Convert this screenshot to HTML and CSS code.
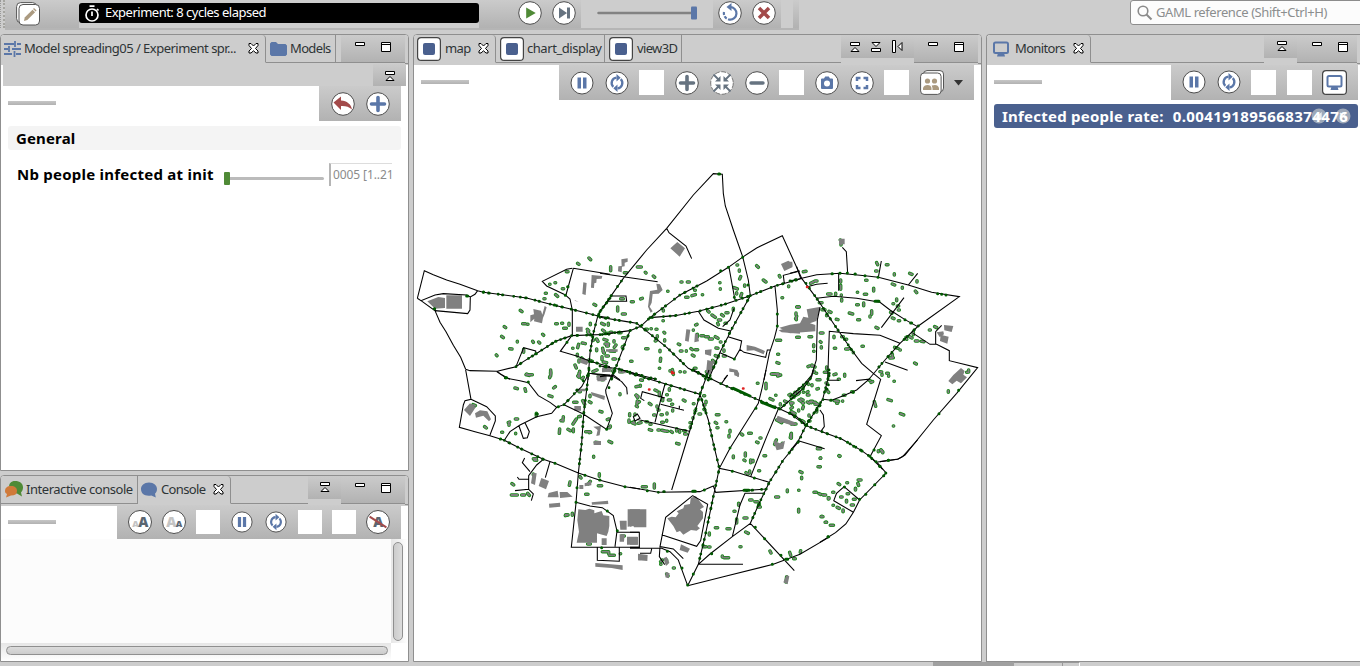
FILE: index.html
```html
<!DOCTYPE html>
<html lang="en">
<head>
<meta charset="utf-8">
<title>Experiment perspective</title>
<link rel="stylesheet" href="styles.css">
</head>
<body>
<svg class="defs" width="0" height="0">
  <defs>
    <symbol id="disc" viewBox="0 0 24 24"><circle cx="12" cy="12" r="11.3" fill="#fff" stroke="#4d4d4d"/></symbol>
    <symbol id="pause" viewBox="0 0 24 24"><circle cx="12" cy="12" r="11" fill="#fff" stroke="#4d4d4d"/><path d="M7.5 6.5h3.500v11H7.500zM13 6.500h3.500v11H13z" fill="#5b77a8"/></symbol>
    <symbol id="sync" viewBox="0 0 24 24"><circle cx="12" cy="12" r="11" fill="#fff" stroke="#4d4d4d"/><path d="M8.300 15.800A5.300 5.300 0 0 1 11.500 6.700M15.700 8.200A5.300 5.300 0 0 1 12.500 17.300" fill="none" stroke="#5b77a8" stroke-width="2.300"/><path d="M11.500 3l4.200 3.700-4.200 3.700zM12.500 13.600v7.400l-4.200-3.700z" fill="#5b77a8"/></symbol>
    <symbol id="minmax" viewBox="0 0 40 14"><path d="M.5 3.500h9v3h-9zM26.500 3.500h9v9h-9z" fill="#fff" stroke="#000"/><path d="M26.500 5.500h9" stroke="#000"/></symbol>
    <symbol id="toggle" viewBox="0 0 12 12"><path d="M1.500 1.500h9v3h-9zM2 10.500l4-4 4 4z" fill="#fff" stroke="#000"/></symbol>
    <symbol id="close" viewBox="0 0 11 11"><path d="M1 .5h2l2.500 2.500L8 .5h2v2L7.500 5.500 10 8v2H8L5.500 7.800 3 10H1V8l2.500-2.500L1 2.500z" fill="#fff" stroke="#000"/></symbol>
    <symbol id="display" viewBox="0 0 24 24"><rect x=".6" y=".6" width="22.800" height="22.800" rx="3.500" fill="#fff" stroke="#444" stroke-width="1.200"/><rect x="6" y="6" width="12" height="12" rx="2" fill="#4a608e"/></symbol>
    <symbol id="screen" viewBox="0 0 18 16"><rect x="2" y="1.500" width="14" height="10.500" rx="1.500" fill="none" stroke="#5b77a8" stroke-width="2"/><path d="M6 12h6l1 3.500H5z" fill="#5b77a8"/></symbol>
    <symbol id="bubble" viewBox="0 0 18 16"><path d="M9 .5c5 0 8 3 8 6.500 0 2-.8 3.500-2 4.800l.8 3.700-4.500-2C5 14.500 1 12 1 7 1 3.500 4 .5 9 .5z"/></symbol>
  </defs>
</svg>

<header class="top">
  <div class="grip"></div>
  <div class="top-edit shade"><svg width="24" height="25" viewBox="0 0 24 25"><rect x=".6" y="1.600" width="20" height="20" rx="4" fill="#fff" stroke="#555"/><rect x="3" y="3.500" width="20.500" height="20.500" rx="4" fill="#fff" stroke="#555"/><path d="M8 20l.7-3.500 7.800-7.800 2.600 2.600-7.800 7.800z" fill="#ab9a80"/><path d="M17 8l1-1 2.600 2.600-1 1z" fill="#ab9a80"/></svg></div>
  <div class="status"><svg width="16" height="17" viewBox="0 0 16 17"><circle cx="8" cy="10" r="6" fill="none" stroke="#fff" stroke-width="1.700"/><path d="M5.500 1.200h5M8 6.500V11M13 4l1.500 1.500" stroke="#fff" stroke-width="1.700"/></svg><span>Experiment: 8 cycles elapsed</span></div>
  <div class="top-run shade">
    <svg width="24" height="24" viewBox="0 0 24 24"><use href="#disc"/><path d="M8.200 6.500v11l9.500-5.500z" fill="#4f8a36"/></svg>
    <svg width="24" height="24" viewBox="0 0 24 24"><use href="#disc"/><path d="M7 6.500v11l8-5.500zM15 6.500h3v11h-3z" fill="#667380"/></svg>
  </div>
  <div class="top-speed"><svg width="102" height="16" viewBox="0 0 102 16"><path d="M1.500 7h94" stroke="#828282" stroke-width="2.500" stroke-linecap="round"/><rect x="94" y=".5" width="6" height="13" rx="1" fill="#5b77a8"/></svg></div>
  <div class="top-stop shade">
    <svg width="24" height="24" viewBox="0 0 24 24"><use href="#disc"/><path d="M12 6a6.300 6.300 0 1 1-6 5" fill="none" stroke="#5b77a8" stroke-width="2.200" stroke-dasharray="22 1.500 3 1.500 3 1.500"/><path d="M13.500 2v8L8.500 6z" fill="#5b77a8"/></svg>
    <svg width="24" height="24" viewBox="0 0 24 24"><use href="#disc"/><path d="M7 7l10 10M17 7L7 17" stroke="#a34a4a" stroke-width="3.500"/></svg>
  </div>
  <div class="top-gap"></div><div class="top-end shade"></div>
  <div class="search"><svg width="16" height="16" viewBox="0 0 16 16"><circle cx="6" cy="6" r="4.800" fill="none" stroke="#8a8a8a" stroke-width="1.600"/><path d="M9.500 9.500l5 5" stroke="#8a8a8a" stroke-width="2"/></svg><span>GAML reference (Shift+Ctrl+H)</span></div>
</header>

<main class="work">
  <div class="left">
    <section class="panel params">
      <div class="tabs">
        <div class="tab active t-model"><svg width="17" height="16" viewBox="0 0 17 16"><path d="M0 3h10M13 3h4M11 0v6M0 8h4M8 8h9M5 5v6M0 13h8M12 13h5M10.500 10v6" stroke="#5b77a8" stroke-width="1.800"/></svg><span>Model spreading05 / Experiment spr...</span><svg class="x" width="11" height="11"><use href="#close"/></svg></div>
        <div class="tab t-models"><svg width="17" height="14" viewBox="0 0 17 14"><path d="M1.500 0H6l2 2h7.500L17 3.500v9L15.500 14h-14L0 12.500v-11z" fill="#5b77a8"/></svg><span>Models</span></div>
        <div class="fill"></div>
        <div class="mm shade"><svg width="40" height="14"><use href="#minmax"/></svg></div>
      </div>
      <div class="strip"><div class="shade"><svg width="12" height="12"><use href="#toggle"/></svg></div></div>
      <div class="barrow"><i class="handle"></i>
        <div class="bar shade">
          <svg width="24" height="24" viewBox="0 0 24 24"><use href="#disc"/><path d="M2.500 10.500L10 4.500v4c6 .5 10 3.500 11 9-3-3-7-3.800-11-3.500v4z" fill="#a34a4a"/></svg>
          <svg width="24" height="24" viewBox="0 0 24 24"><use href="#disc"/><path d="M12 5.500v13M5.500 12h13" stroke="#5b77a8" stroke-width="3.600" stroke-linecap="round"/></svg>
        </div>
      </div>
      <h2 class="group">General</h2>
      <div class="param"><label>Nb people infected at init</label><div class="slider"><i></i></div><div class="field"><span>0005 [1..21</span></div></div>
    </section>
    <section class="panel console">
      <div class="tabs">
        <div class="tab t-inter"><svg width="20" height="18" viewBox="0 0 20 18"><path d="M11 0c5 0 8 2.500 8 6.500 0 2-1 4-2 5l1 4-5-3C8 12 5 10 5 6 5 2.500 7 0 11 0z" fill="#4f8a36"/><path d="M7 5c4 0 6 2 6 5s-2 4.500-6 4.500L2 16.500l1-3.500C1 12 1 11 1 10c0-3 2-5 6-5z" fill="#d07a3a"/></svg><span>Interactive console</span></div>
        <div class="tab active t-cons"><svg width="18" height="16" fill="#5b77a8"><use href="#bubble"/></svg><span>Console</span><svg class="x" width="11" height="11"><use href="#close"/></svg></div>
        <div class="fill"></div>
        <div class="tg shade"><svg width="12" height="12"><use href="#toggle"/></svg></div>
        <div class="mm shade"><svg width="40" height="14"><use href="#minmax"/></svg></div>
      </div>
      <div class="barrow"><i class="handle"></i>
        <div class="bar shade">
          <span class="letters"><small>A</small><b>A</b></span>
          <span class="letters rev"><b>A</b><small>A</small></span>
          <i class="sq"></i><svg width="22" height="22"><use href="#pause"/></svg><svg width="22" height="22"><use href="#sync"/></svg><i class="sq"></i><i class="sq"></i>
          <span class="letters off"><b>A</b></span>
        </div>
      </div>
      <div class="output"><div class="text"></div><div class="vs"><i></i></div><div class="hs"><i></i></div></div>
    </section>
  </div>

  <section class="panel map">
    <div class="tabs">
      <div class="tab active t-map"><svg width="24" height="24"><use href="#display"/></svg><span>map</span><svg class="x" width="11" height="11"><use href="#close"/></svg></div>
      <div class="tab t-chart"><svg width="24" height="24"><use href="#display"/></svg><span>chart_display</span></div>
      <div class="tab t-view"><svg width="24" height="24"><use href="#display"/></svg><span>view3D</span></div>
      <div class="fill"></div>
      <div class="tg shade"><svg width="56" height="14" viewBox="0 0 56 14"><path d="M1.500 2.500h9v3h-9zM2 11.500l4-4 4 4zM22.500 8.500h9v3h-9zM23 2.500h8l-4 4zM43.500.5h3v12h-3zM53 2.500v8l-4-4z" fill="#fff" stroke="#000"/></svg></div>
      <div class="mm shade"><svg width="40" height="14"><use href="#minmax"/></svg></div>
    </div>
    <div class="barrow"><i class="handle"></i>
      <div class="bar shade">
        <svg width="24" height="24"><use href="#pause"/></svg><svg width="24" height="24"><use href="#sync"/></svg><i class="sq"></i>
        <svg width="24" height="24" viewBox="0 0 24 24"><use href="#disc"/><path d="M12 5.500v13M5.500 12h13" stroke="#667380" stroke-width="3.600" stroke-linecap="round"/></svg>
        <svg width="24" height="24" viewBox="0 0 24 24"><circle cx="12" cy="12" r="11.300" fill="#fff" stroke="#777" stroke-dasharray="5 1.500"/><path d="M3.500 3.500L9 9M20.500 3.500L15 9M3.500 20.500L9 15M20.500 20.500L15 15" stroke="#667380" stroke-width="1.800"/><path d="M10.500 5v5.500H5zM13.500 5v5.500H19zM10.500 19v-5.500H5zM13.500 19v-5.500H19z" fill="#667380"/></svg>
        <svg width="24" height="24" viewBox="0 0 24 24"><use href="#disc"/><path d="M6 12h12" stroke="#667380" stroke-width="3.400" stroke-linecap="round"/></svg><i class="sq"></i>
        <svg width="24" height="24" viewBox="0 0 24 24"><use href="#disc"/><path d="M7 7.500h2l1.200-2h3.600l1.200 2h2q1 0 1 1V17q0 1-1 1H7q-1 0-1-1V8.500q0-1 1-1z" fill="#5b77a8"/><circle cx="12" cy="12.500" r="3" fill="#fff"/></svg>
        <svg width="24" height="24" viewBox="0 0 24 24"><use href="#disc"/><path d="M7 10V7h3.500M13.500 7H17v3M17 14v3h-3.500M10.500 17H7v-3" fill="none" stroke="#5b77a8" stroke-width="2.500"/></svg><i class="sq"></i>
        <svg width="24" height="25" viewBox="0 0 24 25"><rect x="3.500" y=".6" width="20" height="21" rx="3.500" fill="#fff" stroke="#555"/><rect x=".6" y="3" width="20.500" height="21.400" rx="3.500" fill="#fff" stroke="#555"/><g fill="#ab9a80"><circle cx="7.500" cy="11" r="2.600"/><circle cx="14.500" cy="11" r="2.600"/><path d="M3 20v-2q1-3 4.500-3t4 3v2zM12.500 20v-2l-.8-2.500q6-2 7.300 2.500v2z"/></g></svg>
        <svg class="drop" width="9" height="6"><path d="M0 0h9L4.500 5.500z" fill="#333"/></svg>
      </div>
    </div>
    <svg class="city" width="566" height="560" viewBox="414 100 566 560">
      <defs>
        <g id="main">
          <path transform="translate(410 160) scale(.3333)" d="M220 397L350 414 430 435 485 448 565 468 600 474M485 527L600 523M318 620L340 605 377 582 437 544 485 527M600 415L570 455 563 470 550 520 540 580 534 660M545 605L600 620"/>
          <path transform="translate(600 160) scale(.3333)" d="M0 455L70 355M0 472L80 485 110 490 122 499M0 524L90 512 122 499 150 473 225 467 295 454 370 434 451 407 525 378 600 357M122 499L200 562 265 625 325 655M90 512L35 655M0 618L60 628 130 648 170 658M451 407L392 513 360 577 325 660M150 473L240 405 320 363"/>
          <path transform="translate(790 220) scale(.3333)" d="M48 190L80 235 130 310 185 390M0 183L35 175M385 318L330 370 285 420 250 460M118 460L98 538 48 617M0 580L48 617 90 633 155 657 215 692 240 710 278 748M40 495L0 530"/>
          <path transform="translate(440 370) scale(.3333)" d="M447 0L440 60 431 132 425 220 415 310M520 10L505 60M545 0L600 15M193 211L240 235 310 268M372 104L400 75 447 10"/>
          <path transform="translate(630 370) scale(.3333)" d="M0 10L210 73 235 0M190 0L270 40 350 75 450 117 500 140 527 165 565 182M210 73L235 150 250 220 268 295 250 380 225 500 205 583M597 0L597 40 575 100 527 165 508 212 460 270 418 337 390 395 361 460M450 117L520 55 545 20M210 73L180 180M350 362L410 357M85 367L125 362"/>
        </g>
        <g id="houses">
          <path transform="translate(410 160) scale(.3333)" d="M503 310l4 3M537 294l5 5M469 335h5M409 400h-3M437 404l6 5M402 416h3M457 386h4M419 373h1M435 368h2M331 451l5 4M338 491h8M352 493h2M283 500l4 3M275 529l5 4M322 544v2M368 544l2 3M386 546l3 3M299 566l7 1M259 585l2 2M341 568v9M437 491h5M455 490h3M477 490v6M461 505h8M541 490v4M552 433l5 3M575 490l8 4M398 523l3 3M506 553l-3 10M526 551l-9-2M502 583v5M488 565h1M533 516l6 7M560 537l4 7M551 540l-3 2M582 538l9 3M590 558h5M580 575l3 4M560 567v5M495 615l4 9M515 594l4 4M537 600l10 4M507 640v12M561 630l-12 5M580 606l10 2M350 642l8 4M422 636v12M573 648l10 6M520 652l-4 4M532 508l4 4M507 600v6M595 490v6M593 520h5"/>
          <path transform="translate(600 160) scale(.3333)" d="M32 320v12M112 321h12M136 337l2 2M73 338h7M94 425h6M127 415l-5 2M160 348l4 4M53 441v12M67 462h9M190 450v3M203 394h1M189 482h1M246 366h-3M262 366h6M257 412h7M276 407l10-3M307 404h1M284 391h2M359 368h1M361 386v2M323 452l4 4M336 465l10 7M365 464l5 4M384 458h-6M362 480h-7M353 490l2 4M375 490h4M400 445v6M62 416h8M411 315h2M418 330v4M422 350l-3 7M434 375v4M402 383l10 4M410 398v4M425 401l-3 8M470 317l5 5M490 360l8 6M538 347l2 4M566 378v2M546 413h2M592 440h4M590 469l-3 7M530 541h12M533 583h3M531 608l6 2M514 642h11M542 645l-9 3M287 495l4-2M280 510v1M292 523v8M303 527h8M317 530h8M328 537h9M346 530l8 5M361 546h2M348 564l6 1M346 587l8 4M370 588h6M338 601l8 8M333 618l4 7M319 635h4M372 570v4M136 508h6M153 506h1M168 508h3M192 517l2 2M172 527v4M194 539v4M170 540l-4 3M137 566h7M180 571v4M182 595l-1 9M92 604h4M235 552l4 2M241 573h5M273 566l4 3M259 572v2M286 569h7M277 585l5 3M217 629l2 8M241 635h-1M253 636h2M283 625h5M178 625h1M210 632v1M8 510l6 5M31 517h5M55 518h8M68 533h7M42 542v4M15 552h11M48 555l-5 7M8 565l3 13M30 573l14 1M18 588h7M6 590v9M68 560l-1 2M39 597h7"/>
          <path transform="translate(790 220) scale(.3333)" d="M151 60l5 8M153 73v2M40 155l8-1M62 190l9-5M75 183h6M152 180v6M152 196v12M260 128l3 6M289 134h5M257 153h4M313 161v4M359 160l7 3M381 182v4M307 192l7 3M337 202v3M376 213l4 5M202 217h1M223 223h7M251 205v8M227 181h4M113 222h10M154 225v1M137 220v4M155 238v5M200 254h5M221 249v8M245 272v11M240 288v3M178 279l10 3M203 299h6M320 237v5M309 251h2M322 258h4M328 270h-3M306 280l-4-3M307 294l5 2M325 302h4M258 322l6 3M20 261h8M18 279v5M19 297v2M88 248h8M96 269h9M117 274l6 3M110 284v3M139 298l5 1M91 339h8M57 350h8M20 352h8M91 365l2 2M94 380v4M71 374v6M71 394h1M132 349v4M155 350h5M167 358h3M133 385h4M167 387h5M175 387l3-2M190 397v1M216 379h4M164 463v6M148 478h-3M138 462l-6 2M70 438l5 3M54 440l5-2M66 435v4M110 441v5M103 457h8M78 460h2M72 453v4M81 479h9M66 494v3M85 506l-4 1M108 489h3M111 511l5 6M52 490l4 3M39 502v5M54 515l-3 2M15 517v6M25 522l-6 3M33 537l6 3M4 550v4M52 546l5 3M60 545l4 3M75 553h9M4 575l11 6M36 602l6 4M57 603h3M6 612h12M80 570v6M57 585v3M80 550l8 7M133 542l13 2M140 550h3M158 543v1M165 526h-5M185 515h4M253 545l4 14M294 539l10 3M331 581l10 4M310 618h1M374 429l5 3M314 382l10 3M330 390h1M307 403v11M300 414l10-1M348 352l2 6M359 350l7 4M370 335v9M376 363h8M394 364l8 1M418 330h3M434 320l6 3M475 512v5M536 450v6M530 457h2M270 455l5 1M276 463v3M290 460h5M296 467v2M312 484h1M237 481h3M243 487l5-2M273 690l5 5M265 692v3M148 708h2M83 685h9M90 715h2M84 740h5M4 640v14"/>
          <path transform="translate(440 370) scale(.3333)" d="M258 14l8 1M270 14h7M332 0v12M329 20v3M225 54l7 2M255 56l2 8M341 54l5-4M327 77l9 3M413 18h4M419 4v5M370 140v4M363 152l5-3M369 147v6M409 147l-10 15M400 177v8M384 178l7 4M416 140l5-1M401 97h10M428 92l6 11M448 95l5 3M450 76v4M417 65h4M437 185h13M452 187l-4 1M461 259v3M466 217l11 1M507 214l8 4M511 168v3M505 173h4M480 124l6 2M507 147l-5 2M540 71v3M539 5h10M588 50l7-1M589 75l5 4M592 93l-1 9M589 108l3 2M569 131v6M567 150v7M576 158l9 4M585 132v3M205 158l4-2M207 162v4M226 147h7M185 187h3M227 190v1M359 177l-1 13M134 170l5 4M289 130v8M99 104l7 3M280 266h9M283 270l7 1M216 341l5 4M214 375h18M245 375h9M263 370l5 6M280 312v3M390 336l-2 10M420 320l3 4M451 334l-6 8M478 311v8M475 347h10M437 373h7M377 434h7M397 430v6M376 437l8-2M443 522h8M545 498h8M487 545h15M506 545v6M508 556h15M541 551h1M518 3h6M475 20l10-2M490 29h-5"/>
          <path transform="translate(630 370) scale(.3333)" d="M127 7l3 6M32 30l5 1M31 46v3M18 76l5 7M26 97l2-2M58 100l5 4M75 60l6 3M88 67v10M118 56v5M110 74h2M115 90h7M125 103h3M98 88v4M81 108v3M84 120h3M93 134h4M111 129v3M128 120v3M160 90l5 3M190 101h2M207 132h5M189 143v2M180 158h3M181 170v3M12 154v6M25 160l8-2M48 155h4M60 163h3M58 179l7 2M84 180h4M96 181l9 2M109 184h4M123 184l4 3M140 176v7M149 183v4M161 182h5M164 192h5M95 157h5M110 151v3M71 135h4M140 220l7 2M195 122h2M221 77h3M228 94v4M221 105h4M222 118l3 2M259 134h8M288 155h2M256 157l4 3M261 173h3M300 181v5M297 196v5M334 192l4 3M356 190h8M380 216l4 2M390 204h3M346 249v9M310 258v5M342 270l3 2M362 270v8M369 271v4M402 257h5M386 302h3M359 303v6M348 308l6 4M483 193l-2 10M483 202v2M439 210l-5 13M457 220l-5 8M440 150l15 8M462 153l12 2M484 162h8M382 40h2M428 12h17M408 40v16M420 86l9 4M437 76h1M451 101v4M464 93l6 3M483 82h9M482 99h7M477 75l4-2M502 65l6 3M520 67h1M532 75h5M507 90l6 4M517 99h4M542 94h6M552 97h4M520 110l-2 6M483 115l4-3M506 120v3M530 38h3M572 263v2M570 290h1M510 305l6 3M515 322v4M562 236h10M472 360v5M506 361h1M437 381h9M552 367h7M567 371l5 2M581 375h6M595 383v4M506 418v8M573 440h6M588 457h2M359 390h7M375 395h8M384 411h7M388 400v5M326 400v6M312 424h3M320 447v12M342 444h9M347 486l8 4M291 476h9M256 473h7M238 489v6M220 530h8M236 531h4M330 530h3M282 563h14M277 558v3M420 543l3 6M479 547l3 9M491 566h5M512 542l-1 5M37 350h12M73 342v12M92 575l5-5M92 583h1M110 570v8M110 612l4 6M130 594h3M470 620l-2 16"/>
          <path transform="translate(820 440) scale(.3444 .3333)" d="M177 30l5 8M55 47l2 2M53 131l4 3M78 128h2M111 120h8M110 130l2 6M103 145v5M37 157h3M8 164h1M26 173v3M60 171h4M79 161h4M77 181v5M97 178h5M91 195h6M50 202l6 3M67 210v5M5 229h1M15 247h3M30 256h9M38 196h1"/>
        </g>
      </defs>
      <use href="#houses" class="h-green"/>
      <use href="#houses" class="h-grey"/>
      <g class="blocks">
        <path transform="translate(410 160) scale(.3333)" d="M52 424L85 411 105 414V444L75 446zM109 406H156V446H109zM370 447L393 452 397 464 404 438 410 442 404 462 399 474 396 490 372 484 373 476 361 487 361 466 372 463zM545 345L577 348 575 356 560 357 559 368 553 370 552 384 543 383zM520 367L530 369 527 405 517 402zM498 500H518V515H498zM512 594L540 600 530 615 511 608zM576 625L600 624V635L576 637zM560 646H590V660H560zM493 420l13 5-10-2z"/>
        <path transform="translate(600 160) scale(.3333)" d="M211 265L232 246 255 265 239 290zM64 298L83 295V305L74 308V319L66 320 65 337 54 334 55 319 65 318zM150 393L172 389 169 371 180 373 188 390 176 401 158 402 155 428 149 440 158 454 152 458 144 440zM259 508L271 509 266 545 255 542zM285 519l8 5 4 20-14 3zM315 570l20-2-2 20-18-5zM322 600l20 5-10 35-15 10zM440 555L465 560 495 573 491 583 462 571 440 572zM388 625L412 630 418 642 414 652 403 637 388 635zM536 511L575 500 600 493V521L545 517zM543 312L565 302 577 310 577 322 553 333zM8 620l28 5-4 12-25-5zM18 568h35v7H18zM55 630h22v10H55z"/>
        <path transform="translate(790 220) scale(.3333)" d="M-32 323L0 314 30 310 40 290 55 293 50 268 92 260 79 303 60 310 76 315V334L0 340zM462 315L490 318 485 336 463 331zM440 337l20-3 2 9-13 8zM452 344L476 350 472 371 450 363zM475 483L490 465 513 444 524 453 520 464 531 472 513 490 500 482 487 493zM147 56h17v17h-17zM0 125h7v15H0z"/>
        <path transform="translate(440 370) scale(.3333)" d="M72 120L90 100 107 112 90 138zM105 130L120 121 142 124 153 148 147 154 130 137 108 143zM304 324L327 333 318 358 296 348zM278 308L290 310 285 345 273 340zM326 369L353 362 356 382H323zM359 366H382L398 380 360 384zM327 401L360 398 361 410 328 413zM453 66L495 78 493 90 455 76zM413 56H436V64H413zM460 170L483 168 479 196 469 198 473 180zM461 213h22v12h-22zM472 22h24v12h-24zM403 108h20v14h-20zM455 397L504 392 505 402 456 404zM415 418L436 420 448 416 463 421V430L485 423 490 436 508 438V468L505 485 500 498 471 490V518H410L417 485 412 450zM485 505h15v20h-15zM539 452h21v27h-19zM563 418H600V470L589 467 563 470zM561 500h32v24h-32zM539 493h15l-2 22h-13zM466 579L548 586V600L515 594 466 590zM594 553h8v18h-8zM418 345h12v12h-12zM434 340l20-6v12l-20 3z"/>
        <path transform="translate(630 370) scale(.3333)" d="M190 380L198 379 222 411 210 418 219 426V445L202 468 210 475 200 482 183 480 160 494 150 483 140 487 130 468 112 445 125 440 137 442 146 430 140 424 160 415 163 405 180 402 182 385zM0 418H49V472H12L10 467 0 470zM153 523L180 536 173 548 149 540zM24 551L53 555 52 573 25 571zM0 501h24v23H0zM470 615l8 4-5 24-13-6zM100 565l10-5 8 18-10 10zM443 137L495 157 490 168 438 150zM430 212l20 8 15-8-5 24-20 5zM312 3l15 6v12l-14-5zM107 605l12 5-3 15-10-3z"/>
      </g>
      <g class="roads">
        <path transform="translate(410 160) scale(.3333)" d="M22 415L43 332 70 344 110 360 150 373 203 392 220 397 350 414 430 435 485 448 565 468 600 474M22 415L33 422 75 405 100 401 170 405 181 411 195 403 203 392M181 411L180 450 173 461 75 452 33 422M75 452L90 487 108 515 130 556 152 592 167 628M167 628L180 632 262 634 318 620 340 605 377 582 437 544 485 527 600 523M262 634L270 641 300 658M318 620L341 563 377 573 378 582M487 325L470 328 397 364 410 378 465 404 480 417 487 450V527M490 325L600 343M490 325L468 405M600 415L570 455 563 470 550 520 540 580 534 660M483 530L451 574 500 588 545 605 600 620M534 640L600 645"/>
        <path transform="translate(600 160) scale(.3333)" d="M0 455L70 355 140 270 200 205 280 105 340 41 367 43 370 100 376 138 400 210 428 290 445 360 451 407M200 205L207 218 258 258 275 296M0 340L75 351 173 365M33 408H78L80 424H22M0 472L80 485 110 490 122 499M0 524L90 512 122 499 150 473 210 428 240 405 320 363 385 322 427 292 470 264 547 227 605 355M150 473L225 467 295 454 370 434 451 407 525 378 600 357M295 454L312 480 355 505 392 513M387 322L405 420M451 407L392 513 384 530 360 577 325 660M402 445L390 480 368 500M384 530L425 543 420 568 403 597 360 578M420 568L432 577 497 592 502 570H512M525 378L532 450V500L523 535 508 580 492 660M122 499L200 562 265 625 325 655M90 512L35 655M0 618L60 628 130 648 170 658M600 333L550 346 553 370M383 645L372 658M0 650L40 645 60 660"/>
        <path transform="translate(790 220) scale(.3333)" d="M35 175L80 235 130 310 185 390 215 430 250 460 272 478 230 613 274 647 240 710M0 183L80 164 150 160 225 167 265 172 355 195 425 217 508 230 385 318 330 370 285 420 235 480 200 510 160 527 125 541 98 538M157 82L169 95 173 160M146 160V212M274 123L265 172M383 160L355 195M52 200L80 193 113 190M80 235L130 229 200 235 270 247 300 270 345 299 383 320M342 233L274 323M90 262L82 300 79 420 65 465 40 495 0 530M330 370L270 346 190 341 118 334 113 480 98 538 48 617 25 662 0 693M370 340L420 373H440L478 392V422L563 443 500 520 430 600 345 705 325 717 270 725M437 373V335L455 316M285 426L353 451M113 481H147M198 482L240 477M0 580L48 617 90 633 155 657 215 692 240 710 278 748M90 570L100 585 103 620 92 635M25 662L104 686M0 160L25 153M33 178L20 140"/>
        <path transform="translate(440 370) scale(.3333)" d="M77 0L93 88 75 92 70 105 58 172 105 185 150 197 193 211 240 235 310 268 345 280 415 309 480 331 555 350 600 357M93 88L140 110 166 138V153L150 195M170 5L200 25 240 32 265 38 295 77 330 97 350 112 335 130 290 140 240 165 210 185 193 211M237 168L250 205 262 203 268 185 255 158M350 112L372 104 400 75 425 50 447 10 520 20 545 35 560 53 562 73M372 104L430 132 500 178 517 130 498 70 497 60 522 0M447 0L440 60 431 132 425 220 415 310 408 400 394 532H600M408 397L450 408 487 413 520 437 531 483 525 530M531 487H598M472 532V571L538 574V532M310 268L290 285 266 317V358L280 372 274 392M266 358L225 362M266 328H237L232 321M254 264L247 278 270 305M330 275L316 323M545 0L600 15"/>
        <path transform="translate(630 370) scale(.3333)" d="M0 10L210 73 237 0M190 0L270 40 350 75 450 117 500 140 527 165M210 73L235 150 250 220 268 295 250 380 225 500 205 583 173 647M408 0L395 60 385 100 350 155 300 235 268 295 310 304 375 324 418 337M450 117L520 55 545 20 550 0M508 212L460 270 418 337 390 395 361 460 307 500 240 552 205 583M445 117L410 200 362 320M210 73L180 180 125 360M0 352L85 367 210 365 250 348 257 367 410 357M405 370H345L330 405 307 500M361 460L493 602M205 583H339M173 647L280 620 430 583 510 553 600 500M188 377L107 442 90 530 130 537 160 566M188 377L233 403 212 512 200 529 95 494M0 535H95L120 545 145 570 173 647M90 530L88 560 104 584M65 537L62 550H30M0 487H28V532H0M105 42L92 90 75 157M20 148L178 184M43 92L32 85 37 65 105 84M92 103L162 121M148 107V118M10 140L22 132 30 145 15 153zM293 15L275 40"/>
        <path transform="translate(820 440) scale(.3444 .3333)" d="M145 50L168 70 192 99 115 180 97 217 75 252 45 278 0 307M283 0L240 50 225 58 168 66M115 180L70 140 48 160 40 182 97 217"/>
      </g>
      <use href="#main" class="people"/>
      <g class="walkers">
        <path transform="translate(410 160) scale(.3333)" d="M220 396h1M170 408h3M433 435h1M466 406h0M473 380h1M73 446h1M287 653h3M377 581h2M437 544h1M471 547h0"/>
        <path transform="translate(600 160) scale(.3333)" d="M356 42h3M362 332h0M385 322h0M428 292h0M444 375h0M532 462h0M532 498h0M403 412h0M403 597h0"/>
        <path transform="translate(790 220) scale(.3333)" d="M126 161h1M150 160h0M172 159h0M195 162h1M225 167h0M264 172h0M443 221h0M455 223h0M468 225h0M362 309h3M255 244h12M506 511h0M447 581h0M295 721h1M270 739h0M345 299h0M190 517h0M122 541h2"/>
        <path transform="translate(440 370) scale(.3333)" d="M196 23h0M265 36h0M355 110h0M289 132h3M181 207h1M435 316h0M479 330h1M555 350h0M411 353h0M408 397h0M502 423h0M532 482h0M500 178h0M485 533h0M345 280h0"/>
        <path transform="translate(630 370) scale(.3333)" d="M188 364h8M223 360h0M342 361h15M52 362h0M300 234h0M378 115h0M307 304h0M245 551h0M190 612h0M173 645h0M427 583h0M404 506h0M376 472h0M453 556h0M594 500h0M156 594h0M112 544h0M467 568h6M373 324h0M310 55l50 23M395 97l40 16"/>
        <path transform="translate(820 440) scale(.3444 .3333)" d="M80 7h0M98 19h0M122 33h0M145 49h0M157 30h0M163 65h0M174 79h0M191 99h0M185 107h0M159 134h0M133 163h0M115 178h0M71 141h0M24 290h0M198 61h0"/>
      </g>
      <path class="sick" d="M807 287h.5M673 373h.5M743 388.500h.5M649 389.500h.5M672 372v1"/>
    </svg>
  </section>

  <section class="panel monitors">
    <div class="tabs">
      <div class="tab active t-mon"><svg width="18" height="18" viewBox="0 0 18 16"><use href="#screen"/></svg><span>Monitors</span><svg class="x" width="11" height="11"><use href="#close"/></svg></div>
      <div class="fill"></div>
      <div class="tg shade"><svg width="12" height="12"><use href="#toggle"/></svg></div>
      <div class="mm shade"><svg width="40" height="14"><use href="#minmax"/></svg></div>
    </div>
    <div class="barrow"><i class="handle"></i>
      <div class="bar shade">
        <svg width="24" height="24"><use href="#pause"/></svg><svg width="24" height="24"><use href="#sync"/></svg><i class="sq"></i><i class="sq"></i>
        <svg width="25" height="25" viewBox="0 0 25 25"><rect x=".6" y=".6" width="23.800" height="23.800" rx="3.500" fill="#fff" stroke="#444" stroke-width="1.200"/><use href="#screen" x="3.500" y="4.500" width="18" height="16"/></svg>
      </div>
    </div>
    <div class="monitor">
      <svg class="m-btns" width="40" height="18" viewBox="0 0 40 18"><circle cx="8" cy="9" r="7.500" fill="#9da8b8"/><circle cx="32" cy="9" r="7.500" fill="#9da8b8"/><path d="M4 11.500L10 6.500v5zM29 6l6 6M35 6l-6 6" stroke="#e8ebee" stroke-width="1.400" fill="#e8ebee"/></svg>
      <span class="m-name">Infected people rate:</span><span class="m-val">0.004191895668374476</span>
    </div>
  </section>
</main>
<footer class="bottom"><i class="b1"></i><i class="b2"></i><i class="b3"></i></footer>
</body>
</html>
```
FILE: styles.css
```css
* { box-sizing: border-box; }
body {
  margin: 0;
  width: 1360px;
  height: 666px;
  overflow: hidden;
  display: flex;
  flex-direction: column;
  background: #cdcdcd;
  color: #2e3436;
  font-family: "Noto Sans", sans-serif;
  font-size: 13px;
  white-space: nowrap;
}
svg { display: block; flex: none; }
.defs { position: absolute; }
.shade { background: linear-gradient(#cbcbcb, #b2b2b2); }

/* Main toolbar */
.top {
  height: 34px;
  flex: none;
  display: flex;
  align-items: flex-start;
  background: linear-gradient(#b5b5b5, #b5b5b5) 5px 28px / 794px 2px no-repeat;
}
.top > div { height: 28px; flex: none; }
.top .grip { width: 5px; border-left: 1px dotted #999; border-right: 2px dotted #a5a5a0; }
.top-edit { width: 74px; padding: 1px 0 0 11px; }
.top .status {
  width: 400px;
  height: 20px;
  margin-top: 3px;
  border-radius: 3px;
  background: #000;
  color: #fff;
  display: flex;
  align-items: center;
  gap: 5px;
  padding-left: 5px;
}
.status span { letter-spacing: -0.5px; line-height: 18px; margin-top: -2px; }
.top-run { width: 102px; padding: 1px 0 0 39px; display: flex; gap: 10px; }
.top-speed { width: 132px; padding: 6px 0 0 16px; }
.top-stop { width: 68px; padding: 1px 0 0 5px; display: flex; gap: 10px; }
.top-gap { width: 12px; }
.top-end { width: 6px; }
.top .search {
  width: 240px;
  height: 25px;
  margin-left: 331px;
  border: 1px solid #8c8c8c;
  border-radius: 3px;
  background: #fcfcfc;
  display: flex;
  align-items: center;
  gap: 3px;
  padding-left: 6px;
  color: #8b8e8f;
}
.search span { letter-spacing: -0.42px; margin-top: -1px; }

/* Workbench columns */
.work { height: 628px; flex: none; display: grid; grid-template-columns: 409px 569px 374px; column-gap: 4px; }
.left { display: grid; grid-template-rows: 437px 187px; row-gap: 4px; min-height: 0; }
.panel { border: 1px solid #8f8f8f; border-radius: 4px 4px 0 0; background: #fff; overflow: hidden; min-width: 0; display: flex; flex-direction: column; }
.tabs { height: 30px; flex: none; display: flex; background: #cdcdcd; border-bottom: 2px solid #cdcdcd; }
.tab { height: 28px; display: flex; align-items: center; flex: none; border-right: 1px solid #8f8f8f; border-bottom: 1px solid #8f8f8f; }
.tab.active { border-bottom-color: #cdcdcd; border-radius: 0 4px 0 0; }
.tab span { flex: 1; min-width: 0; margin-top: -2px; letter-spacing: -0.65px; }
.tabs .fill { flex: 1; border-bottom: 1px solid #8f8f8f; }
.mm { border-bottom: 1px solid #8f8f8f; }
.mm svg { margin-top: -1px; }
.tg { height: 23px; }
.tabs::after { content: ""; border-bottom: 1px solid #8f8f8f; height: 28px; width: 3px; }
.t-model { width: 265px; padding: 0 6px 0 3px; gap: 3px; }
.tab.t-model span { letter-spacing: -0.52px; }
.t-models { width: 70px; padding-left: 4px; gap: 3px; }
.params .mm, .console .mm { width: 64px; padding: 5px 0 0 14px; }
.strip { height: 22px; flex: none; margin: -1px 2px 0; background: #cdcdcd; display: flex; justify-content: flex-end; }
.strip div { width: 33px; padding: 6px 0 0 11px; }
.barrow { height: 35px; flex: none; display: flex; justify-content: space-between; padding-left: 7px; }
.handle { width: 48px; height: 4px; margin-top: 15px; background: linear-gradient(#c6c6c6, #b2b2b2); }
.bar { display: grid; grid-auto-flow: column; grid-auto-columns: 35px; align-items: center; justify-items: center; padding-left: 5px; }
.sq { width: 25px; height: 25px; background: #fff; }
.params .bar { width: 82px; margin-right: 7px; padding-left: 6px; }
.group { margin: 5px 7px 0; height: 24px; border-radius: 3px; background: #f4f4f4; font-size: 15px; line-height: 25px; padding-left: 8px; color: #000; letter-spacing: 0.15px; }
.param { display: flex; margin: 12px 8px 0 16px; height: 26px; }
.param label { width: 207px; font-size: 15px; font-weight: 700; line-height: 25px; color: #000; letter-spacing: 0.24px; }
.slider { display: flex; width: 100px; height: 3px; margin-top: 15px; border-radius: 2px; background: #bbb; }
.slider i { width: 6px; height: 13px; transform: translateY(-5px); background: #4f8a36; border-radius: 1px; }
.field { margin-left: 5px; margin-top: 1px; width: 63px; height: 23px; border-left: 2px solid #b5b5b5; border-top: 1px solid #ddd; color: #8b8b8b; font-size: 12px; line-height: 21px; padding-left: 2px; }
.field span { letter-spacing: -0.1px; }

/* Console */
.t-inter { width: 137px; padding-left: 3px; gap: 2px; }
.tab.t-inter span { letter-spacing: -0.46px; }
.t-cons { width: 93px; padding: 0 6px 0 2px; gap: 3px; }
.console .tg { width: 33px; padding: 5px 0 0 11px; }
.console .barrow { height: 34px; margin-top: -1px; }
.console .bar { width: 284px; margin-right: 7px; grid-auto-columns: 34px; padding-left: 6px; }
.console .sq { width: 24px; height: 24px; }
.letters { width: 24px; height: 24px; border: 1px solid #4d4d4d; border-radius: 50%; background: #fff; display: flex; justify-content: center; align-items: baseline; font-weight: 800; line-height: 22px; color: #5a6672; font-family: "Open Sans", sans-serif; letter-spacing: -0.5px; }
.letters b { font-size: 14px; font-weight: 800; }
.letters small { font-size: 9px; color: #c4c4c4; }
.letters.rev b { color: #c4c4c4; }
.letters.rev small { color: #5a6672; }
.letters.off { position: relative; }
.letters.off::after { content: ""; position: absolute; left: 1px; top: 10px; width: 20px; height: 2px; background: #a34a4a; transform: rotate(33deg); }
.output { flex: 1; display: grid; grid-template-columns: 390px 1fr; grid-template-rows: 1fr 18px; }
.text { background: #fcfcfc; }
.vs { background: linear-gradient(90deg, #e6e6e6, #fff); padding: 3px 0 0 2px; }
.vs i { display: block; width: 10px; height: 99px; border: 1px solid #8f8f8f; border-radius: 5px; background: linear-gradient(90deg, #ccc, #dcdcdc); }
.hs { background: linear-gradient(#e6e6e6, #fff); padding: 3px 0 0 5px; }
.hs i { display: block; width: 382px; height: 9px; border: 1px solid #8f8f8f; border-radius: 5px; background: linear-gradient(#dcdcdc, #ccc); }

/* Map display */
.t-map { width: 82px; padding: 0 6px 0 3px; gap: 4px; }
.t-chart { width: 109px; padding-left: 4px; gap: 3px; }
.tab.t-chart span { letter-spacing: -0.45px; }
.t-view { width: 77px; padding-left: 4px; gap: 4px; }
.map .tg { width: 73px; padding: 5px 0 0 8px; }
.map .mm { width: 64px; padding: 5px 0 0 14px; }
.map .bar { width: 415px; margin-right: 7px; padding-left: 5px; }
.blocks { fill: #808080; }
.bar .drop { margin-right: 16px; }
.roads { fill: none; stroke: #000; stroke-width: 3.200; }
.h-green { fill: none; stroke: #148614; stroke-width: 10.500; stroke-linecap: round; stroke-linejoin: round; }
.h-grey { fill: none; stroke: #808080; stroke-width: 5.500; stroke-linecap: round; }
.people { fill: none; stroke: #004a00; stroke-width: 8.500; stroke-linecap: round; stroke-dasharray: 0 16 2 27 0 13 1 33 0 20; }
.walkers { fill: none; stroke: #005a00; stroke-width: 9; stroke-linecap: round; }
.sick { stroke: #e02020; stroke-width: 2.500; stroke-linecap: round; }

/* Monitors */
.t-mon { width: 104px; padding: 0 6px 0 5px; gap: 5px; }
.monitors { border-right: 0; border-radius: 4px 0 0 0; }
.monitors .tg { width: 33px; padding: 5px 0 0 12px; }
.monitors .mm { width: 60px; padding: 5px 0 0 15px; }
.monitors .bar { width: 187px; margin-right: 2px; grid-auto-columns: 35.200px; }
.monitors .bar > * { margin-top: -1px; }
.monitor { display: flex; align-items: center; position: relative; margin: 4px 2px 0 7px; height: 24px; border-radius: 3px; background: #4a608e; color: #fff; font-weight: 700; font-size: 15px; padding-left: 8px; gap: 9px; }
.monitor span { position: relative; }
.m-name { letter-spacing: 0.24px; }
.m-val { letter-spacing: 0.42px; }
.m-btns { position: absolute; right: 7px; top: 3px; }

/* Status line */
.bottom { height: 4px; display: flex; padding-left: 933px; }
.b1 { width: 81px; background: #a0a0a0; }
.b2 { width: 49px; border-top: 1px solid #999; border-right: 1px solid #999; }
.b3 { width: 17px; border-top: 1px solid #999; border-right: 1px solid #fff; }
```
